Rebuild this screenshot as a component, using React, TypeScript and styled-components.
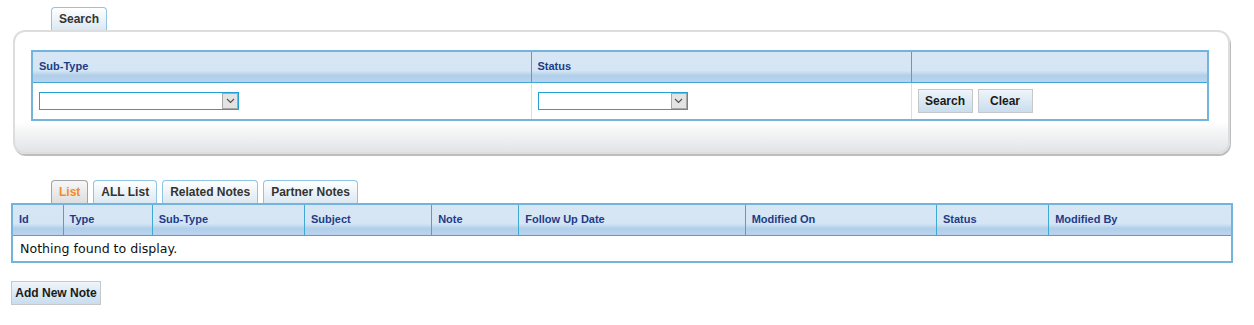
import { JSX } from "react";
import styled, { createGlobalStyle } from "styled-components";

const GlobalStyle = createGlobalStyle`
  body {
    margin: 0;
    background: #fff;
    font-family: "Liberation Sans", Arial, sans-serif;
  }
`;

const StyledPage = styled.div`
  padding: 7px 0 0 0;
`;

const StyledSearchArea = styled.section`
  margin-left: 13px;
  width: 1217px;
`;

const StyledTabStrip = styled.div<{ $indent: number }>`
  display: flex;
  gap: 5px;
  padding-left: ${({ $indent }) => $indent}px;
`;

const StyledTab = styled.div<{ $active?: boolean }>`
  height: 22px;
  padding: 0 7px;
  display: flex;
  align-items: center;
  font-size: 12px;
  font-weight: 700;
  border: 1px solid ${({ $active }) => ($active ? "#a3a3a3" : "#8ec5e4")};
  border-bottom: none;
  border-radius: 4px 4px 0 0;
  color: ${({ $active }) => ($active ? "#f58a2b" : "#333")};
  background: ${({ $active }) =>
    $active
      ? "linear-gradient(to bottom, #f7f7f7, #dedede)"
      : "linear-gradient(to bottom, #ffffff, #dbe8f2)"};
`;

const StyledPanel = styled.div`
  box-sizing: border-box;
  height: 124px;
  border: 2px solid #dddddd;
  border-radius: 12px;
  box-shadow: 1px 2px 0 #bdbdbd;
  padding: 18px 19px 0 16px;
  background: linear-gradient(
    to bottom,
    #ffffff 0,
    #ffffff 90px,
    #f6f7f7 98px,
    #e1e4e7 100%
  );
`;

const StyledGrid = styled.table`
  width: 100%;
  border-collapse: collapse;
  border: 2px solid #72b4dc;
  table-layout: fixed;
`;

const StyledHeadCell = styled.th`
  height: 27px;
  padding: 0 6px 3px;
  text-align: left;
  vertical-align: middle;
  font-size: 11px;
  font-weight: 700;
  color: #1d3c88;
  border-left: 1px solid #3ea9d6;
  border-bottom: 1px solid #3ea9d6;
  background: linear-gradient(
    to bottom,
    #d7e6f5 0%,
    #d5e5f4 62%,
    #b0cfe9 78%,
    #bcd2ee 100%
  );
  &:first-child {
    border-left: none;
  }
`;

const StyledBodyCell = styled.td<{ $height: number }>`
  height: ${({ $height }) => $height}px;
  padding: 0 6px;
  vertical-align: middle;
  border-left: 1px solid #dddddd;
  background: #fff;
  &:first-child {
    border-left: none;
  }
`;

const StyledEmpty = styled.td`
  height: 25px;
  padding: 0 7px;
  font-family: "DejaVu Sans", Verdana, sans-serif;
  font-size: 12.6px;
  color: #111;
  background: #fff;
`;

const StyledSelect = styled.div<{ $width: number }>`
  width: ${({ $width }) => $width}px;
  height: 18px;
  box-sizing: border-box;
  border: 1px solid #22a0d6;
  display: flex;
  justify-content: flex-end;
  background: #fff;
`;

const StyledArrow = styled.div`
  width: 16px;
  height: 16px;
  box-sizing: border-box;
  border: 1px solid #a8a8a8;
  background: #e3e3e3;
  display: flex;
  align-items: center;
  justify-content: center;
`;

const StyledButtonRow = styled.div`
  display: flex;
  gap: 5px;
`;

const StyledButton = styled.button<{ $width: number }>`
  width: ${({ $width }) => $width}px;
  height: 24px;
  padding: 0;
  font-family: "Liberation Sans", Arial, sans-serif;
  font-size: 12px;
  font-weight: 700;
  color: #1a1a1a;
  border: 1px solid #c4c8cb;
  background: linear-gradient(to bottom, #eff5fa, #c8ddee);
`;

const StyledListArea = styled.section`
  margin: 26px 0 0 11px;
  width: 1222px;
`;

const StyledFooter = styled.div`
  margin: 18px 0 0 11px;
`;

function Chevron(): JSX.Element {
  return (
    <svg width="9" height="6" viewBox="0 0 9 6">
      <path d="M1 1 L4.5 4.5 L8 1" fill="none" stroke="#555" strokeWidth="1.2" />
    </svg>
  );
}

function SelectBox({ width }: { width: number }): JSX.Element {
  return (
    <StyledSelect $width={width}>
      <StyledArrow>
        <Chevron />
      </StyledArrow>
    </StyledSelect>
  );
}

const listColumns: [string, number][] = [
  ["Id", 51],
  ["Type", 89],
  ["Sub-Type", 152],
  ["Subject", 127],
  ["Note", 87],
  ["Follow Up Date", 226],
  ["Modified On", 191],
  ["Status", 112],
  ["Modified By", 183],
];

function App(): JSX.Element {
  return (
    <StyledPage>
      <GlobalStyle />

      <StyledSearchArea>
        <StyledTabStrip $indent={38}>
          <StyledTab>Search</StyledTab>
        </StyledTabStrip>
        <StyledPanel>
          <StyledGrid>
            <colgroup>
              <col style={{ width: 499 }} />
              <col style={{ width: 380 }} />
              <col />
            </colgroup>
            <thead>
              <tr>
                <StyledHeadCell>Sub-Type</StyledHeadCell>
                <StyledHeadCell>Status</StyledHeadCell>
                <StyledHeadCell />
              </tr>
            </thead>
            <tbody>
              <tr>
                <StyledBodyCell $height={36}>
                  <SelectBox width={200} />
                </StyledBodyCell>
                <StyledBodyCell $height={36}>
                  <SelectBox width={150} />
                </StyledBodyCell>
                <StyledBodyCell $height={36}>
                  <StyledButtonRow>
                    <StyledButton $width={55}>Search</StyledButton>
                    <StyledButton $width={55}>Clear</StyledButton>
                  </StyledButtonRow>
                </StyledBodyCell>
              </tr>
            </tbody>
          </StyledGrid>
        </StyledPanel>
      </StyledSearchArea>

      <StyledListArea>
        <StyledTabStrip $indent={40}>
          <StyledTab $active>List</StyledTab>
          <StyledTab>ALL List</StyledTab>
          <StyledTab>Related Notes</StyledTab>
          <StyledTab>Partner Notes</StyledTab>
        </StyledTabStrip>
        <StyledGrid>
          <colgroup>
            {listColumns.map(([name, width]) => (
              <col key={name} style={{ width }} />
            ))}
          </colgroup>
          <thead>
            <tr>
              {listColumns.map(([name]) => (
                <StyledHeadCell key={name}>{name}</StyledHeadCell>
              ))}
            </tr>
          </thead>
          <tbody>
            <tr>
              <StyledEmpty colSpan={listColumns.length}>Nothing found to display.</StyledEmpty>
            </tr>
          </tbody>
        </StyledGrid>
      </StyledListArea>

      <StyledFooter>
        <StyledButton $width={90}>Add New Note</StyledButton>
      </StyledFooter>
    </StyledPage>
  );
}

export default App;
